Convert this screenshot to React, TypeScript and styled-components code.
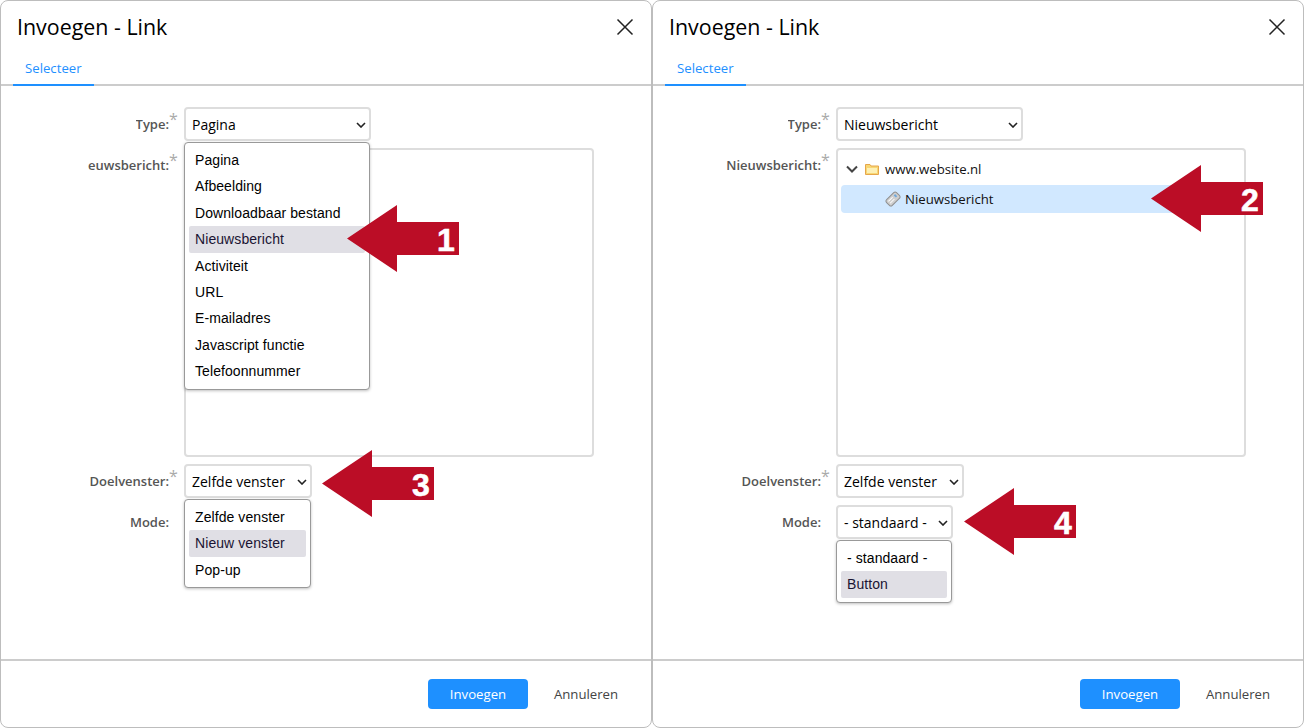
import {FC} from "react";
import styled, {createGlobalStyle} from "styled-components";

const GlobalStyle = createGlobalStyle`
  html, body {
    margin: 0;
    padding: 0;
    background: #fff;
  }

  body {
    font-family: 'Open Sans', sans-serif;
    color: #000;
  }

  * {
    box-sizing: border-box;
  }
`;

const Page = styled.div`
  display: flex;
  width: 1304px;
  height: 728px;
  overflow: hidden;
`;

const Dialog = styled.section`
  position: relative;
  display: flex;
  flex-direction: column;
  width: 652px;
  height: 728px;
  border: 1px solid #bdbdbd;
  border-radius: 8px;
  background: #fff;
`;

const Header = styled.header`
  display: flex;
  align-items: center;
  justify-content: space-between;
  height: 52px;
  padding: 0 17px 0 16px;
`;

const Title = styled.h1`
  margin: 0;
  font-size: 21.4px;
  font-weight: 400;
  line-height: 52px;
`;

const CloseButton = styled.button`
  display: flex;
  padding: 0;
  border: 0;
  background: none;
`;

const Tabs = styled.nav`
  display: flex;
  height: 33px;
  padding-left: 12px;
  border-bottom: 2px solid #cccccc;
`;

const Tab = styled.a`
  height: 33px;
  padding: 6px 12px 0;
  border-bottom: 2px solid #1e90ff;
  color: #1e90ff;
  font-size: 13.2px;
  line-height: 18px;
`;

const Form = styled.div`
  flex: 1;
  display: flex;
  flex-direction: column;
  gap: 7px;
  padding-top: 21px;
`;

const Row = styled.div`
  display: grid;
  grid-template-columns: 177px 1fr;
  column-gap: 6px;
  align-items: start;
`;

const Label = styled.label`
  display: flex;
  justify-content: flex-end;
  height: 34px;
  color: #555;
  font-size: 13px;
  font-weight: 600;
  line-height: 34px;
  white-space: nowrap;
`;

const LabelText = styled.span<{$clip?: number}>`
  display: flex;
  justify-content: flex-end;
  overflow: hidden;
  max-width: ${p => (p.$clip ? `${p.$clip}px` : 'none')};
`;

const Star = styled.span<{$hidden?: boolean}>`
  width: 9px;
  color: #aaa;
  font-size: 16px;
  font-weight: 400;
  line-height: 24px;
  visibility: ${p => (p.$hidden ? 'hidden' : 'visible')};
`;

const Slot = styled.div<{$width: number}>`
  position: relative;
  width: ${p => p.$width}px;
`;

const Select = styled.select`
  display: block;
  width: 100%;
  height: 34px;
  padding: 0 6px;
  border: 2px solid #dddddd;
  border-radius: 4px;
  background: #fff;
  color: #000;
  font-family: 'Open Sans', sans-serif;
  font-size: 14px;
  appearance: none;
`;

const SelectChevron = styled.svg`
  position: absolute;
  top: 15px;
  right: 5px;
  pointer-events: none;
`;

const Popup = styled.ul`
  position: absolute;
  z-index: 10;
  top: calc(100% + 1px);
  left: 0;
  right: 1px;
  margin: 0;
  padding: 4.100px 4px 3.900px;
  list-style: none;
  border: 1px solid #999;
  border-radius: 4px;
  background: #fff;
  box-shadow: 0 1px 3px rgba(0, 0, 0, 0.25);
`;

const PopupItem = styled.li<{$active?: boolean}>`
  height: 26.4px;
  padding-left: 6px;
  border-radius: 2px;
  background: ${p => (p.$active ? '#e0dfe5' : 'transparent')};
  color: ${p => (p.$active ? '#1a1433' : '#000')};
  font-family: 'Liberation Sans', Arial, sans-serif;
  font-size: 14px;
  letter-spacing: 0.08px;
  line-height: 26.4px;
  white-space: nowrap;
`;

const TreeBox = styled.div`
  display: flex;
  flex-direction: column;
  gap: 1px;
  width: 410px;
  height: 309px;
  padding: 4px 3px;
  border: 2px solid #dddddd;
  border-radius: 4px;
`;

const TreeRow = styled.div<{$selected?: boolean; $indent: number}>`
  display: flex;
  align-items: center;
  gap: ${p => (p.$selected ? 4 : 6)}px;
  height: ${p => (p.$selected ? 28 : 30)}px;
  padding-left: ${p => p.$indent}px;
  border-radius: 4px;
  background: ${p => (p.$selected ? '#d1e8ff' : 'transparent')};
  color: #111;
  font-size: 13.2px;
`;

const TreeChevron = styled.svg`
  margin-right: 1px;
`;

const Footer = styled.footer`
  display: flex;
  align-items: center;
  justify-content: flex-end;
  height: 68px;
  padding: 0 7px 0 0;
  border-top: 2px solid #cccccc;
`;

const PrimaryButton = styled.button`
  width: 100px;
  height: 30px;
  border: 0;
  border-radius: 4px;
  background: #1e90ff;
  color: #fff;
  font-family: 'Open Sans', sans-serif;
  font-size: 13.2px;
`;

const GhostButton = styled.button`
  width: 116px;
  height: 30px;
  border: 0;
  background: none;
  color: #444;
  font-family: 'Open Sans', sans-serif;
  font-size: 13.2px;
`;

const ArrowMark = styled.svg<{$x: number; $y: number}>`
  position: absolute;
  z-index: 20;
  left: ${p => p.$x}px;
  top: ${p => p.$y}px;
`;

const Arrow: FC<{x: number; y: number; n: number}> = ({x, y, n}) => (
    <ArrowMark $x={x} $y={y} width="112" height="67" viewBox="0 0 112 67">
        <polygon points="0,33.500 50,0 50,17 112,17 112,50 50,50 50,67" fill="#bb0d26"/>
        <text
            x="99"
            y="45.500"
            fill="#fff"
            stroke="#fff"
            strokeWidth="0.6"
            fontFamily="'Liberation Sans', Arial, sans-serif"
            fontSize="32"
            fontWeight="700"
            textAnchor="middle"
        >
            {n}
        </text>
    </ArrowMark>
);

const CloseIcon: FC = () => (
    <svg width="18" height="18" viewBox="0 0 18 18">
        <path d="M1.5 1.5 16.5 16.5M16.5 1.5 1.5 16.5" stroke="#222" strokeWidth="1.5" fill="none"/>
    </svg>
);

const ChevronIcon: FC = () => (
    <TreeChevron width="12" height="8" viewBox="0 0 12 8">
        <path d="M1 1.5 6 6.5 11 1.5" stroke="#444" strokeWidth="2" fill="none"/>
    </TreeChevron>
);

const FolderIcon: FC = () => (
    <svg width="14" height="11" viewBox="0 0 14 11">
        <path d="M.5 .5h4.500l1 1.500h7.500v8.500h-13z" fill="#f8d774" stroke="#e6a64a"/>
        <rect x="2" y="4" width="10" height="5" fill="#fdf0b5"/>
    </svg>
);

const TagIcon: FC = () => (
    <svg width="16" height="16" viewBox="0 0 16 16">
        <g transform="rotate(-45 8 8)">
            <rect x="1" y="4" width="14" height="8" rx="2" fill="#cfcfcf" stroke="#8f8f8f"/>
            <rect x="3" y="6" width="6" height="1" fill="#fff"/>
            <rect x="3" y="8.500" width="6" height="1" fill="#fff"/>
            <rect x="11" y="6" width="2" height="3" fill="#6ea8dc"/>
        </g>
    </svg>
);

const typeOptions = [
    'Pagina',
    'Afbeelding',
    'Downloadbaar bestand',
    'Nieuwsbericht',
    'Activiteit',
    'URL',
    'E-mailadres',
    'Javascript functie',
    'Telefoonnummer',
];
const targetOptions = ['Zelfde venster', 'Nieuw venster', 'Pop-up'];
const modeOptions = ['- standaard -', 'Button'];

const FieldSelect: FC<{value: string; options: string[]; width: number; active?: string; open?: boolean}> = (
    {value, options, width, active, open}
) => (
    <Slot $width={width}>
        <Select defaultValue={value}>
            {options.map(o => <option key={o}>{o}</option>)}
        </Select>
        <SelectChevron width="10" height="6" viewBox="0 0 10 6">
            <path d="M1 1 5 5 9 1" stroke="#222" strokeWidth="1.6" fill="none"/>
        </SelectChevron>
        {open && (
            <Popup>
                {options.map(o => <PopupItem key={o} $active={o === active}>{o}</PopupItem>)}
            </Popup>
        )}
    </Slot>
);

const FieldLabel: FC<{text: string; required?: boolean; clip?: number}> = ({text, required, clip}) => (
    <Label>
        <LabelText $clip={clip}><span>{text}</span></LabelText>
        <Star $hidden={!required}>*</Star>
    </Label>
);

const DialogFrame: FC<{children: React.ReactNode}> = ({children}) => (
    <Dialog>
        <Header>
            <Title>Invoegen - Link</Title>
            <CloseButton aria-label="Sluiten"><CloseIcon/></CloseButton>
        </Header>
        <Tabs>
            <Tab>Selecteer</Tab>
        </Tabs>
        {children}
        <Footer>
            <PrimaryButton>Invoegen</PrimaryButton>
            <GhostButton>Annuleren</GhostButton>
        </Footer>
    </Dialog>
);

const App: FC = () => (
    <Page>
        <GlobalStyle/>
        <DialogFrame>
            <Form>
                <Row>
                    <FieldLabel text="Type:" required/>
                    <FieldSelect value="Pagina" options={typeOptions} width={187} active="Nieuwsbericht" open/>
                </Row>
                <Row>
                    <FieldLabel text="Nieuwsbericht:" required clip={81}/>
                    <TreeBox/>
                </Row>
                <Row>
                    <FieldLabel text="Doelvenster:" required/>
                    <FieldSelect value="Zelfde venster" options={targetOptions} width={128} active="Nieuw venster" open/>
                </Row>
                <Row>
                    <FieldLabel text="Mode:"/>
                    <FieldSelect value="- standaard -" options={modeOptions} width={117}/>
                </Row>
            </Form>
            <Arrow x={346} y={204} n={1}/>
            <Arrow x={321} y={449} n={3}/>
        </DialogFrame>
        <DialogFrame>
            <Form>
                <Row>
                    <FieldLabel text="Type:" required/>
                    <FieldSelect value="Nieuwsbericht" options={typeOptions} width={187}/>
                </Row>
                <Row>
                    <FieldLabel text="Nieuwsbericht:" required/>
                    <TreeBox>
                        <TreeRow $indent={5}>
                            <ChevronIcon/>
                            <FolderIcon/>
                            <span>www.website.nl</span>
                        </TreeRow>
                        <TreeRow $selected $indent={44}>
                            <TagIcon/>
                            <span>Nieuwsbericht</span>
                        </TreeRow>
                    </TreeBox>
                </Row>
                <Row>
                    <FieldLabel text="Doelvenster:" required/>
                    <FieldSelect value="Zelfde venster" options={targetOptions} width={128}/>
                </Row>
                <Row>
                    <FieldLabel text="Mode:"/>
                    <FieldSelect value="- standaard -" options={modeOptions} width={117} active="Button" open/>
                </Row>
            </Form>
            <Arrow x={498} y={164} n={2}/>
            <Arrow x={311} y={487} n={4}/>
        </DialogFrame>
    </Page>
);

export default App;
